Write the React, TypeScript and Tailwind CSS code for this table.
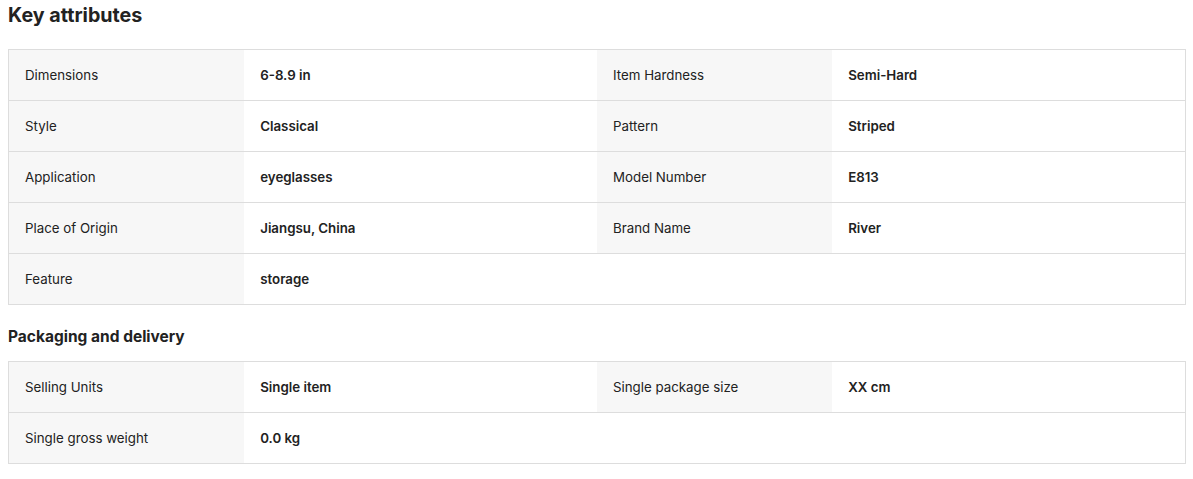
import React from "react";

type Pair = [string, string];

function Table({ rows }: { rows: Pair[][] }) {
  return (
    <div className="border border-[#dddddd]">
      {rows.map((row, i) => (
        <div
          key={i}
          className={`flex ${i < rows.length - 1 ? "border-b border-[#dddddd]" : ""}`}
        >
          {[0, 1].map((j) => {
            const p = row[j];
            return (
              <div key={j} className="flex w-1/2">
                {p ? (
                  <>
                    <div className="w-[40%] h-[50px] flex items-center px-4 pt-[2px] bg-[#f7f7f7] text-[13.3px] text-[#222222]">
                      {p[0]}
                    </div>
                    <div className="w-[60%] h-[50px] flex items-center px-4 pt-[2px] text-[13.3px] font-semibold text-[#222222]">
                      {p[1]}
                    </div>
                  </>
                ) : (
                  <div className="h-[50px] w-full" />
                )}
              </div>
            );
          })}
        </div>
      ))}
    </div>
  );
}

export default function App() {
  const key: Pair[][] = [
    [["Dimensions", "6-8.9 in"], ["Item Hardness", "Semi-Hard"]],
    [["Style", "Classical"], ["Pattern", "Striped"]],
    [["Application", "eyeglasses"], ["Model Number", "E813"]],
    [["Place of Origin", "Jiangsu, China"], ["Brand Name", "River"]],
    [["Feature", "storage"]],
  ];
  const pack: Pair[][] = [
    [["Selling Units", "Single item"], ["Single package size", "XX cm"]],
    [["Single gross weight", "0.0 kg"]],
  ];
  return (
    <div
      className="w-[1193px] bg-white px-[8px] text-[#222222]"
      style={{ fontFamily: "Inter, 'Noto Sans', sans-serif" }}
    >
      <div className="w-[1178px]">
        <h2 className="text-[19.7px] leading-[28px] font-bold pt-[1px] mb-[20px]">Key attributes</h2>
        <Table rows={key} />
        <h3 className="text-[15.5px] leading-[24px] font-bold mt-[20px] mb-[12px]">Packaging and delivery</h3>
        <Table rows={pack} />
      </div>
    </div>
  );
}
